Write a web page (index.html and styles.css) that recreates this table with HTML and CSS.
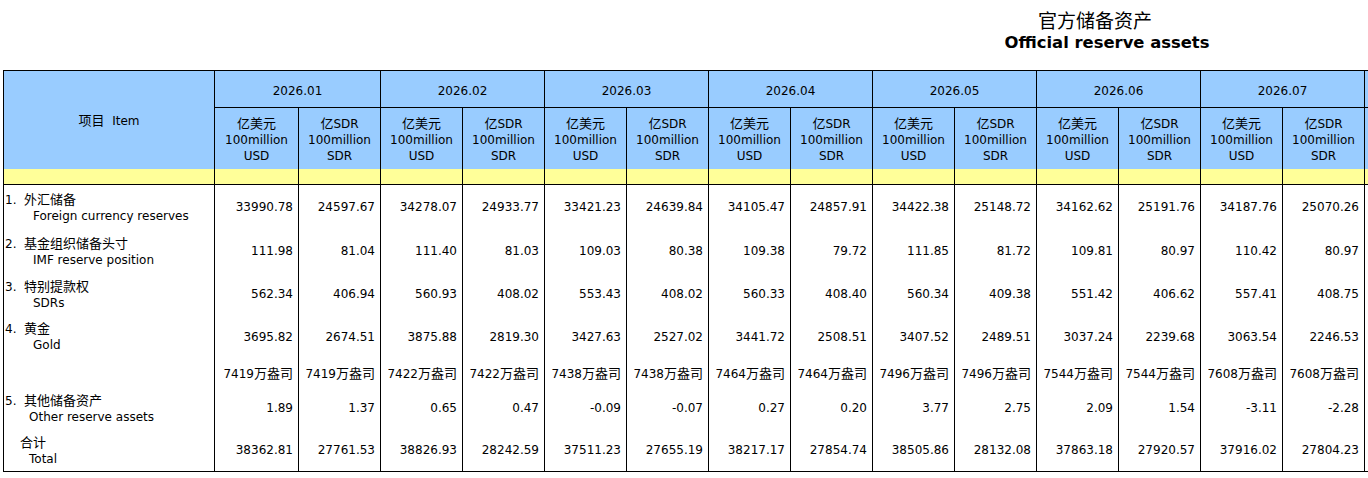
FILE: index.html
```html
<!DOCTYPE html>
<html lang="zh-CN">
<head>
<meta charset="utf-8">
<title>官方储备资产 Official reserve assets</title>
<link rel="stylesheet" href="styles.css">
</head>
<body>
<div class="page">
  <header class="title">
    <div class="title-zh">官方储备资产</div>
    <div class="title-en">Official reserve assets</div>
  </header>
  <table class="sheet">
    <colgroup>
      <col class="c-item">
      <col class="c-first">
      <col class="c-num"><col class="c-num"><col class="c-num"><col class="c-num"><col class="c-num"><col class="c-num"><col class="c-num"><col class="c-num"><col class="c-num"><col class="c-num"><col class="c-num"><col class="c-num"><col class="c-num"><col class="c-num"><col class="c-num">
    </colgroup>
    <thead>
      <tr class="h-month">
        <th class="item-head" rowspan="2"><span class="zh">项目</span>&nbsp;&nbsp;Item</th>
        <th colspan="2">2026.01</th>
        <th colspan="2">2026.02</th>
        <th colspan="2">2026.03</th>
        <th colspan="2">2026.04</th>
        <th colspan="2">2026.05</th>
        <th colspan="2">2026.06</th>
        <th colspan="2">2026.07</th>
        <th colspan="2"></th>
      </tr>
      <tr class="h-unit">
        <th><span class="zh">亿美元</span><br>100million<br>USD</th><th><span class="zh">亿</span>SDR<br>100million<br>SDR</th>
        <th><span class="zh">亿美元</span><br>100million<br>USD</th><th><span class="zh">亿</span>SDR<br>100million<br>SDR</th>
        <th><span class="zh">亿美元</span><br>100million<br>USD</th><th><span class="zh">亿</span>SDR<br>100million<br>SDR</th>
        <th><span class="zh">亿美元</span><br>100million<br>USD</th><th><span class="zh">亿</span>SDR<br>100million<br>SDR</th>
        <th><span class="zh">亿美元</span><br>100million<br>USD</th><th><span class="zh">亿</span>SDR<br>100million<br>SDR</th>
        <th><span class="zh">亿美元</span><br>100million<br>USD</th><th><span class="zh">亿</span>SDR<br>100million<br>SDR</th>
        <th><span class="zh">亿美元</span><br>100million<br>USD</th><th><span class="zh">亿</span>SDR<br>100million<br>SDR</th>
        <th></th><th></th>
      </tr>
      <tr class="h-band">
        <th></th><th></th><th></th><th></th><th></th><th></th><th></th><th></th><th></th><th></th><th></th><th></th><th></th><th></th><th></th><th></th><th></th>
      </tr>
    </thead>
    <tbody>
      <tr class="r-a">
        <td class="label"><div class="l-zh">1.  <span class="zh">外汇储备</span></div><div class="l-en">Foreign currency reserves</div></td>
        <td>33990.78</td><td>24597.67</td><td>34278.07</td><td>24933.77</td><td>33421.23</td><td>24639.84</td><td>34105.47</td><td>24857.91</td><td>34422.38</td><td>25148.72</td><td>34162.62</td><td>25191.76</td><td>34187.76</td><td>25070.26</td><td></td><td></td>
      </tr>
      <tr class="r-b">
        <td class="label"><div class="l-zh">2.  <span class="zh">基金组织储备头寸</span></div><div class="l-en">IMF reserve position</div></td>
        <td>111.98</td><td>81.04</td><td>111.40</td><td>81.03</td><td>109.03</td><td>80.38</td><td>109.38</td><td>79.72</td><td>111.85</td><td>81.72</td><td>109.81</td><td>80.97</td><td>110.42</td><td>80.97</td><td></td><td></td>
      </tr>
      <tr class="r-b">
        <td class="label"><div class="l-zh">3.  <span class="zh">特别提款权</span></div><div class="l-en">SDRs</div></td>
        <td>562.34</td><td>406.94</td><td>560.93</td><td>408.02</td><td>553.43</td><td>408.02</td><td>560.33</td><td>408.40</td><td>560.34</td><td>409.38</td><td>551.42</td><td>406.62</td><td>557.41</td><td>408.75</td><td></td><td></td>
      </tr>
      <tr class="r-c">
        <td class="label"><div class="l-zh">4.  <span class="zh">黄金</span></div><div class="l-en">Gold</div></td>
        <td>3695.82</td><td>2674.51</td><td>3875.88</td><td>2819.30</td><td>3427.63</td><td>2527.02</td><td>3441.72</td><td>2508.51</td><td>3407.52</td><td>2489.51</td><td>3037.24</td><td>2239.68</td><td>3063.54</td><td>2246.53</td><td></td><td></td>
      </tr>
      <tr class="r-oz">
        <td class="label"></td>
        <td>7419<span class="zh">万盎司</span></td><td>7419<span class="zh">万盎司</span></td><td>7422<span class="zh">万盎司</span></td><td>7422<span class="zh">万盎司</span></td><td>7438<span class="zh">万盎司</span></td><td>7438<span class="zh">万盎司</span></td><td>7464<span class="zh">万盎司</span></td><td>7464<span class="zh">万盎司</span></td><td>7496<span class="zh">万盎司</span></td><td>7496<span class="zh">万盎司</span></td><td>7544<span class="zh">万盎司</span></td><td>7544<span class="zh">万盎司</span></td><td>7608<span class="zh">万盎司</span></td><td>7608<span class="zh">万盎司</span></td><td></td><td></td>
      </tr>
      <tr class="r-d">
        <td class="label"><div class="l-zh">5.  <span class="zh">其他储备资产</span></div><div class="l-en l-en-short">Other reserve assets</div></td>
        <td>1.89</td><td>1.37</td><td>0.65</td><td>0.47</td><td>-0.09</td><td>-0.07</td><td>0.27</td><td>0.20</td><td>3.77</td><td>2.75</td><td>2.09</td><td>1.54</td><td>-3.11</td><td>-2.28</td><td></td><td></td>
      </tr>
      <tr class="r-e">
        <td class="label"><div class="l-zh l-total"><span class="zh">合计</span></div><div class="l-en l-en-short">Total</div></td>
        <td>38362.81</td><td>27761.53</td><td>38826.93</td><td>28242.59</td><td>37511.23</td><td>27655.19</td><td>38217.17</td><td>27854.74</td><td>38505.86</td><td>28132.08</td><td>37863.18</td><td>27920.57</td><td>37916.02</td><td>27804.23</td><td></td><td></td>
      </tr>
    </tbody>
  </table>
</div>
</body>
</html>
```

FILE: styles.css
```css
html, body {
  margin: 0;
  padding: 0;
  background: #fff;
}

body {
  font-family: "DejaVu Sans", "Noto Sans CJK SC", sans-serif;
  font-size: 12px;
  color: #000;
}

.page {
  width: 1368px;
  height: 478px;
  overflow: hidden;
}

.zh {
  font-family: "Noto Sans CJK SC", sans-serif;
  font-size: 13px;
}

/* title */
.title {
  width: 400px;
  margin-left: 907px;
  display: flex;
  flex-direction: column;
  align-items: center;
  padding-top: 8px;
}

.title-zh {
  font-family: "Noto Sans CJK SC", sans-serif;
  font-size: 19px;
  line-height: 24px;
  padding-right: 24px;
}

.title-en {
  font-weight: bold;
  font-size: 16.4px;
  line-height: 22px;
}

/* table */
.sheet {
  margin-top: 16px;
  margin-left: 3px;
  border-collapse: collapse;
  table-layout: fixed;
  width: 1525px;
  border-top: 1px solid #000;
  border-bottom: 1px solid #000;
}

.c-item { width: 211px; }
.c-first { width: 84px; }
.c-num { width: 82px; }

.sheet th,
.sheet td {
  border-left: 1px solid #000;
  border-right: 1px solid #000;
  padding: 0 5px 0 4px;
  white-space: nowrap;
  overflow: hidden;
}

.sheet th {
  font-weight: normal;
  background: #99ccff;
  text-align: center;
  vertical-align: middle;
  padding: 0 2px;
}

.h-month { height: 37px; }
.h-month th { border-bottom: 1px solid #000; padding-top: 3px; }
.h-month th.item-head { border-bottom: none; padding-top: 0; }

.h-unit { height: 61px; }
.h-unit th { line-height: 16px; padding-top: 2px; }

.h-band { height: 16px; }
.h-band th {
  background: #ffff99;
  border-bottom: 1px solid #000;
  padding-top: 0;
}

.sheet td {
  text-align: right;
  vertical-align: middle;
}

.sheet td.label {
  text-align: left;
  padding: 0 0 0 1px;
}

.l-zh,
.l-en {
  line-height: 16px;
  white-space: pre;
}

.l-en { padding-left: 28px; }
.l-en-short { padding-left: 24px; }
.l-total { padding-left: 15px; }

.r-a { height: 45px; }
.r-b { height: 43px; }
.r-c { height: 42px; }
.r-oz { height: 29px; }
.r-d { height: 43px; }
.r-e { height: 42px; }
```
